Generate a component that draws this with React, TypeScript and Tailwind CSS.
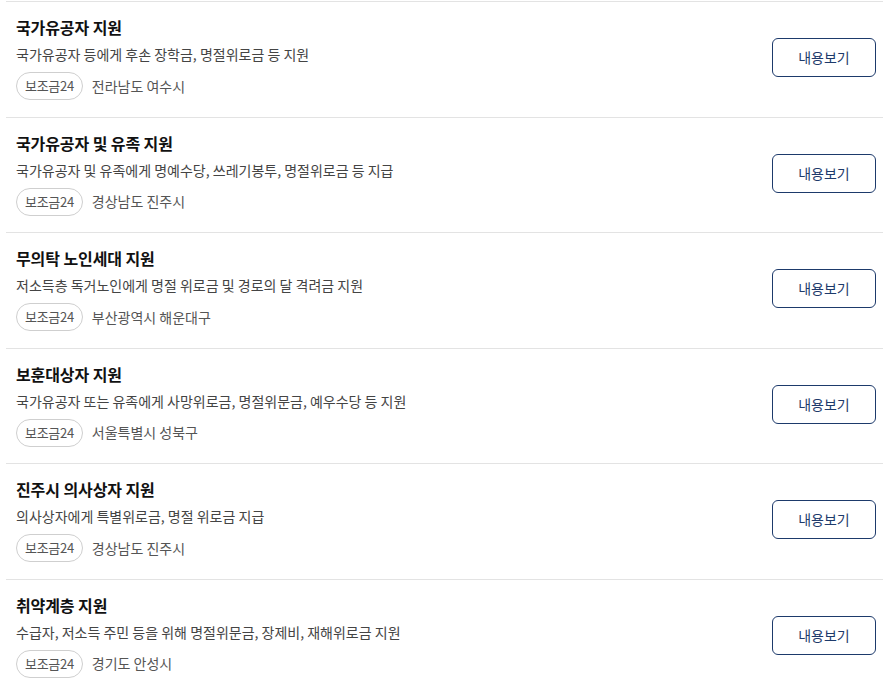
const items = [
  {
    title: "국가유공자 지원",
    desc: "국가유공자 등에게 후손 장학금, 명절위로금 등 지원",
    region: "전라남도 여수시",
  },
  {
    title: "국가유공자 및 유족 지원",
    desc: "국가유공자 및 유족에게 명예수당, 쓰레기봉투, 명절위로금 등 지급",
    region: "경상남도 진주시",
  },
  {
    title: "무의탁 노인세대 지원",
    desc: "저소득층 독거노인에게 명절 위로금 및 경로의 달 격려금 지원",
    region: "부산광역시 해운대구",
  },
  {
    title: "보훈대상자 지원",
    desc: "국가유공자 또는 유족에게 사망위로금, 명절위문금, 예우수당 등 지원",
    region: "서울특별시 성북구",
  },
  {
    title: "진주시 의사상자 지원",
    desc: "의사상자에게 특별위로금, 명절 위로금 지급",
    region: "경상남도 진주시",
  },
  {
    title: "취약계층 지원",
    desc: "수급자, 저소득 주민 등을 위해 명절위문금, 장제비, 재해위로금 지원",
    region: "경기도 안성시",
  },
];

export default function App() {
  return (
    <div className="w-[883px] h-[691px] bg-white overflow-hidden pt-px font-['Noto_Sans_CJK_KR','Noto_Sans',sans-serif]">
      <ul className="ml-[6px]">
        {items.map((item) => (
          <li
            key={item.title}
            className="flex items-center border-t border-[#e3e3e3] pl-[10px] pr-[7px] pt-[13px] pb-[16.5px]"
          >
            <div className="flex-1 flex flex-col">
              <h3 className="text-[16px] leading-[24px] font-bold text-[#111] tracking-[-0.1px]">
                {item.title}
              </h3>
              <p className="mt-[5px] text-[14px] leading-[20px] text-[#444]">{item.desc}</p>
              <div className="mt-[8px] flex items-center gap-[9px]">
                <span className="h-[28px] px-[8px] flex items-center rounded-full border border-[#cfcfcf] text-[13px] text-[#555] tracking-[-0.3px]">
                  보조금24
                </span>
                <span className="text-[14px] text-[#555]">{item.region}</span>
              </div>
            </div>
            <button className="w-[104px] h-[39px] rounded-[6px] border border-[#1d3a6b] text-[14px] text-[#1d3a6b] bg-white">
              내용보기
            </button>
          </li>
        ))}
      </ul>
    </div>
  );
}
